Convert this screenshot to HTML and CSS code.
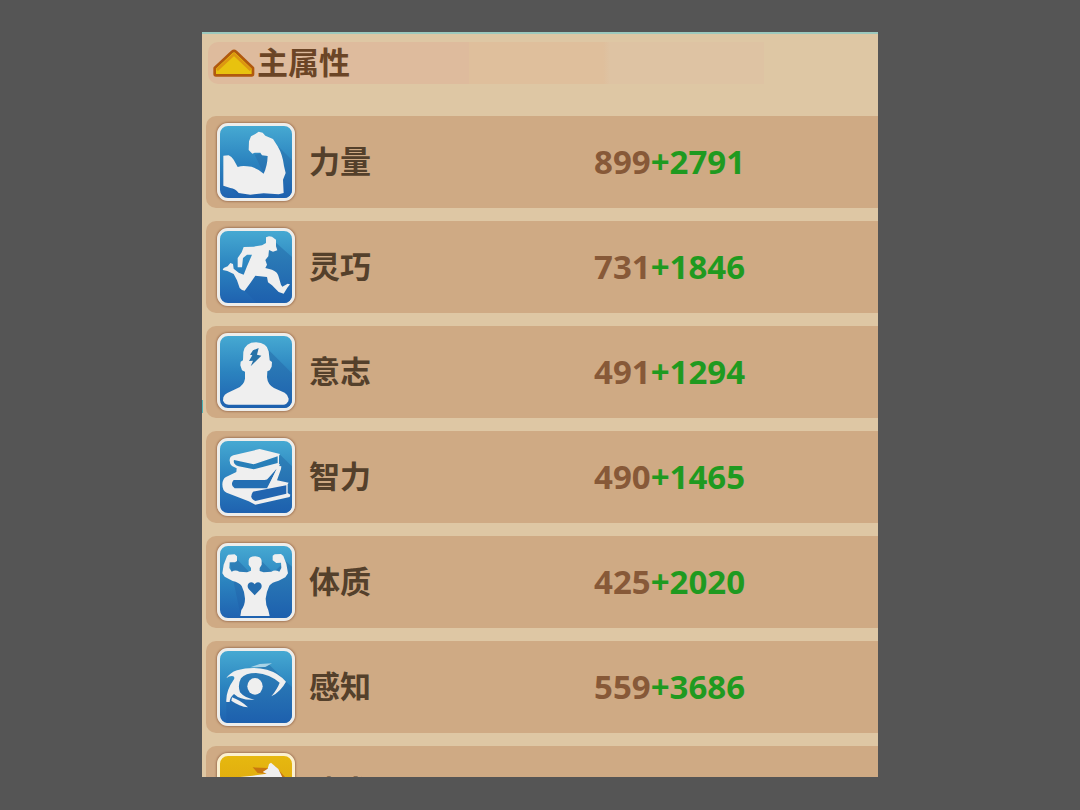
FILE: index.html
```html
<!DOCTYPE html>
<html lang="zh-CN">
<head>
  <meta charset="UTF-8">
  <meta name="viewport" content="width=device-width, initial-scale=1.0">
  <title>主属性</title>
  <link rel="stylesheet" href="styles.css">
</head>
<body>
  <!-- shared gradients -->
  <svg class="defs" width="0" height="0" aria-hidden="true">
    <defs>
      <linearGradient id="shade" x1="0" y1="0" x2="0" y2="1">
        <stop offset="0" stop-color="#2f82b8"/>
        <stop offset="1" stop-color="#1d60ae"/>
      </linearGradient>
    </defs>
  </svg>

  <main class="panel">
    <h1 class="panel-head">
      <button class="toggle" type="button">
        <svg class="arrow" viewBox="0 0 126 84" aria-hidden="true">
          <path d="M57 8 Q63 3 69 8 L120 57 V75 Q120 79 116 79 H9 Q5 79 5 75 V57 Z" fill="#e8c20f" stroke="#b1590e" stroke-width="8" stroke-linejoin="round"/>
          <path d="M12 63 L63 16 L113 63" fill="none" stroke="#dc9612" stroke-width="8"/>
        </svg>
        <span>主属性</span>
      </button>
    </h1>

    <ul class="stats">
      <li class="stat">
        <svg class="icon" viewBox="0 0 216 216" aria-hidden="true">
          <path fill="url(#shade)" d="M176 62 L216 102 V216 H60 L31 186 L131 143 L104 86 L126 81 Z"/>
          <path class="shape" d="M10 89 L26 88 Q38 94 41 101 L53 123 Q68 118 81 121 Q108 122 131 143 Q142 120 143 90 L126 88 L121 80 L104 80 L97 83 L86 72 L87 46 L93 31 L106 24 L116 17 L128 20 L136 29 L159 39 L173 61 Q188 86 192 120 L197 141 L189 161 L191 201 L176 205 L131 202 L91 206 L56 201 Q46 188 31 186 L10 179 Z"/>
        </svg>
        <span class="name">力量</span>
        <span class="value">899<b class="bonus">+2791</b></span>
      </li>
      <li class="stat">
        <svg class="icon" viewBox="0 0 216 216" aria-hidden="true">
          <path fill="url(#shade)" d="M168 35 L216 78 V216 H110 L74 179 L141 60 Z"/>
          <path class="shape" d="M138 19 L147 16 L156 17 L168 26 L168 46 L172 58 L159 62 L147 57 L145 76 L136 87 L141 101 L136 111 L156 116 Q172 122 175 134 L183 161 L187 167 L203 158 L210 160 L202 170 L191 188 L176 183 L156 163 L144 154 L141 138 L106 134 L91 156 L74 179 L66 177 L59 171 L51 148 L41 129 L22 120 L8 117 L11 111 L23 106 L31 96 L39 99 L41 113 L56 125 L71 131 L81 106 L96 71 L81 71 L69 81 L66 109 L53 109 L53 81 L65 64 L71 48 L101 47 L126 43 L138 36 Z"/>
        </svg>
        <span class="name">灵巧</span>
        <span class="value">731<b class="bonus">+1846</b></span>
      </li>
      <li class="stat">
        <svg class="icon" viewBox="0 0 216 216" aria-hidden="true">
          <path fill="url(#shade)" d="M144 40 L216 112 V216 H24 L14 203 L140 190 Z"/>
          <path class="shape" d="M70 48 Q76 19 108 19 Q141 20 146 46 L149 73 L156 78 L155 92 L149 103 L142 106 L141 124 Q143 146 162 156 L194 170 Q204 176 206 188 L205 196 L199 203 Q195 206 190 206 H26 Q18 206 14 202 L9 194 L10 184 Q13 175 22 171 L52 157 Q72 147 75 128 V107 L66 103 L61 88 L62 77 L69 73 Z"/>
          <path fill="#2672a8" d="M99 43 L116 36 L111 56 L124 59 L92 91 L99 74 L87 75 L97 58 L90 56 Z"/>
        </svg>
        <span class="name">意志</span>
        <span class="value">491<b class="bonus">+1294</b></span>
      </li>
      <li class="stat">
        <svg class="icon" viewBox="0 0 216 216" aria-hidden="true">
          <path fill="url(#shade)" d="M179 40 L216 76 V216 H130 L86 181 L170 110 Z"/>
          <path class="shape" d="M29 56 Q30 46 40 43 L119 24 L180 39 L177 44 V68 L180 71 L177 75 L184 76 L183 84 L171 118 L206 125 L203 130 V156 L211 161 L209 168 L106 191 L86 181 L20 155 Q7 150 7 130 Q8 113 18 108 L49 93 L50 82 L36 75 Q28 68 29 56 Z"/>
          <path fill="#287fb9" d="M42 57 L101 70 L173 46 V66 L101 85 L56 76 Q38 71 42 57 Z"/>
          <path fill="#246fb3" d="M41 117 H134 Q142 117 146 110 L170 83 L143 142 H44 Q29 131 41 117 Z"/>
          <path fill="#efefef" d="M173 80 L180 82 L152 142 L141 142 Z"/>
          <path fill="#2265b0" d="M99 152 L199 133 V158 L106 180 Q86 172 99 152 Z"/>
        </svg>
        <span class="name">智力</span>
        <span class="value">490<b class="bonus">+1465</b></span>
      </li>
      <li class="stat">
        <svg class="icon" viewBox="0 0 216 216" aria-hidden="true">
          <path fill="url(#shade)" d="M51 40 L90 80 L124 44 L160 80 L196 44 L216 62 V216 H149 L61 205 L40 104 L29 51 Z"/>
          <path class="shape" d="M21 31 L25 26 L44 25 L51 31 V45 L45 49 L29 49 L28 66 L35 77 Q46 70 58 77 L81 79 L93 74 V66 L86 56 V43 Q87 31 106 31 Q124 32 125 45 V56 L119 66 V75 L131 79 L154 77 Q165 70 178 77 L184 66 L183 50 L169 51 L158 43 V29 L164 25 L183 24 L190 30 L199 53 L204 82 L196 94 L176 104 Q155 109 148 119 Q140 135 137 158 Q137 178 145 193 L149 210 H61 L64 192 Q75 177 75 158 Q74 137 65 120 Q57 109 38 105 L14 92 L7 82 L11 56 Z"/>
          <path fill="#246cae" d="M104 148 L86 129 C75 113 96 100 104 115 C112 100 133 113 122 129 Z"/>
        </svg>
        <span class="name">体质</span>
        <span class="value">425<b class="bonus">+2020</b></span>
      </li>
      <li class="stat">
        <svg class="icon" viewBox="0 0 216 216" aria-hidden="true">
          <path fill="url(#shade)" d="M145 38 L205 98 L216 108 V216 H19 V150 L60 70 Z"/>
          <path class="shape" d="M19 82 Q30 65 51 58 Q96 45 141 56 Q176 66 198 92 Q182 122 154 136 Q172 114 179 95 Q150 70 108 66 Q76 66 63 82 Q52 102 60 124 Q75 142 104 146 Q62 149 42 129 Q30 138 29 153 L19 153 Q17 120 42 85 Q46 75 36 75 Q26 75 19 82 Z"/>
          <path class="shape" d="M36 139 Q60 147 84 169 Q58 166 34 149 Z"/>
          <ellipse class="shape" cx="105" cy="106" rx="23" ry="25"/>
          <path fill="#a9d3e6" d="M91 49 L119 39 L156 37 L136 48 Z"/>
        </svg>
        <span class="name">感知</span>
        <span class="value">559<b class="bonus">+3686</b></span>
      </li>
      <li class="stat">
        <svg class="icon icon-gold" viewBox="0 0 216 216" aria-hidden="true">
          <path fill="#c9770f" d="M98 34 L143 36 L165 30 L216 86 V216 H90 L138 53 L113 51 Z"/>
          <path class="shape" d="M60 63 L98 59 L140 53 L128 48 L143 38 L147 24 L153 20 L175 39 L190 70 L196 110 L170 190 H60 L90 110 L50 72 Z"/>
        </svg>
        <span class="name">法术</span>
      </li>
    </ul>
  </main>
</body>
</html>
```
FILE: styles.css
```css
* {
	box-sizing: border-box;
}

body {
	margin: 0;
	height: 100vh;
	padding: 32px 16px 33px;
	background: #555;
	font-family: "Noto Sans", "Noto Sans CJK SC", sans-serif;
}

.defs {
	position: absolute;
}

.panel {
	position: relative;
	max-width: 676px;
	height: 100%;
	margin: 0 auto;
	overflow: hidden;
	border-top: 2px solid #9cc9be;
	background: #dec7a4;
}

/* small cyan mark on the left edge */
.panel::before {
	content: "";
	position: absolute;
	top: 366px;
	left: 0;
	width: 1px;
	height: 13px;
	background: #4fb3b5;
}

.panel-head {
	margin: 8px 0 0 6px;
	border-radius: 10px 0 0 10px;
	background: linear-gradient(
		90deg,
		#debb9d 39%,
		#dfbf9c 39%,
		#dfbf9c 59%,
		#dec3a3 60%,
		#dec3a3 83%,
		transparent 83%
	);
}

.toggle {
	display: flex;
	align-items: center;
	gap: 2px;
	width: 100%;
	height: 42px;
	padding: 0 5px;
	border: none;
	background: none;
	color: #6b4526;
	font-family: "Noto Sans CJK SC", sans-serif;
	font-size: 31px;
	font-weight: 700;
	line-height: 40px;
	cursor: pointer;
}

.toggle span {
	padding-bottom: 4px;
}

.arrow {
	width: 42px;
	height: 28px;
}

.stats {
	display: grid;
	grid-auto-rows: 92px;
	gap: 13px;
	margin: 32px 0 0 4px;
	padding: 0;
	list-style: none;
}

.stat {
	display: grid;
	grid-template-columns: 78px 41% 1fr;
	align-items: center;
	column-gap: 14px;
	padding-left: 11px;
	border-radius: 10px 0 0 10px;
	background: #cfaa84;
}

.icon {
	width: 78px;
	height: 78px;
	border: 3px solid #ededeb;
	border-radius: 11px;
	background: linear-gradient(#46a9d2, #2b83bf 50%, #1f62b0);
	box-shadow: 0 0 2px 1px #a5795a;
}

.icon-gold {
	border-color: #fbf0cf;
	background: linear-gradient(#e6b80f, #d99a10);
}

.shape {
	fill: #efefef;
}

.name {
	padding-bottom: 4px;
	color: #54402b;
	font-family: "Noto Sans CJK SC", sans-serif;
	font-size: 31px;
	font-weight: 700;
	line-height: 44px;
}

.value {
	color: #875938;
	font-size: 33px;
	font-weight: 700;
	line-height: 44px;
}

.bonus {
	color: #1f9a20;
	font-weight: 700;
}
```
